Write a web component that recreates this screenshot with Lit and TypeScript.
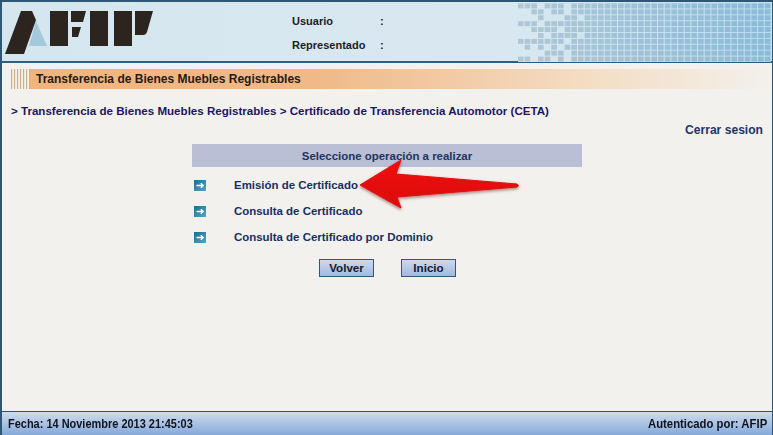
import { LitElement, html, css, svg } from "lit";
import { customElement } from "lit/decorators.js";

const PARTIAL: number[][] = [
  [0,1,2,4,5,6],
  [2,3,5,6],
  [3,7,8],
  [0,1,2,4,5,6,7],
  [2,3,4,5,7],
  [3,5,6,7,8],
  [0,1,2,3,4,5,6],
  [1,3,5,7],
  [4,5,6],
  [0,1,3,4,6],
];
const START = [8, 8, 10, 8, 8, 10, 8, 8, 8, 8];
const COLS = 38;

function lerp(a: number, b: number, t: number) {
  return Math.round(a + (b - a) * t);
}
function cellColor(c: number) {
  const t = Math.min(1, c / (COLS - 1));
  return `rgb(${lerp(176, 140, t)},${lerp(200, 186, t)},${lerp(214, 217, t)})`;
}

const cells = () => {
  const out: unknown[] = [];
  for (let r = 0; r < 10; r++) {
    const on = new Set(PARTIAL[r]);
    for (let c = 0; c < COLS; c++) {
      if (c >= START[r] || on.has(c)) {
        out.push(svg`<rect x=${c * 6.67} y=${r * 6 + 0.5} width="5.6" height="5" fill=${cellColor(c)}></rect>`);
      }
    }
  }
  return out;
};

@customElement("app-root")
export class AppRoot extends LitElement {
  static styles = css`
    :host {
      display: flex;
      flex-direction: column;
      position: relative;
      width: 773px;
      height: 435px;
      box-sizing: border-box;
      overflow: hidden;
      background: #f2f1ed;
      border-left: 2px solid #2f5673;
      border-right: 1px solid #2f5673;
      font-family: "Liberation Sans", Arial, sans-serif;
      font-weight: 700;
    }
    .header {
      flex: none;
      height: 63px;
      box-sizing: border-box;
      display: flex;
      background: linear-gradient(90deg, #d6e6ef 0%, #d9e8f0 65%, #c4deec 100%);
      border-top: 2px solid #2f5673;
      border-bottom: 2px solid #2f5f7c;
    }
    .logo { flex: none; width: 158px; height: 59px; display: block; }
    .user {
      flex: none;
      width: 358px;
      box-sizing: border-box;
      padding: 7px 0 0 132px;
      display: grid;
      grid-template-columns: 88px 10px;
      grid-auto-rows: 24px;
      align-items: center;
      font-size: 11px;
      color: #1c1c28;
    }
    .pixels { flex: none; width: 253px; height: 59px; display: block; margin-top: 1px; }
    .title {
      flex: none;
      margin: 6px 0 0 8px;
      height: 20px;
      display: flex;
      background: linear-gradient(90deg, #efb57e 0%, #f0b988 40%, #f4dcc2 75%, #f3f1ec 100%);
      color: #2a1a14;
      font-size: 12px;
      line-height: 21px;
    }
    .stripes {
      flex: none;
      width: 20px;
      background: #f2f1ed repeating-linear-gradient(90deg, #f2f1ed 0 1px, #cdb089 1px 2px, #f2e8d8 2px 3px);
    }
    .title span { padding-left: 6px; }
    .crumb {
      flex: none;
      margin: 15px 0 0 9px;
      font-size: 11.58px;
      line-height: 14px;
      color: #1c1660;
    }
    .logout {
      flex: none;
      margin: 5px 9px 0 0;
      text-align: right;
      font-size: 12.1px;
      line-height: 14px;
      color: #1d3566;
    }
    .panel {
      flex: none;
      width: 390px;
      margin: 7px 0 0 190px;
      color: #17305f;
      font-size: 11.45px;
    }
    .panel-head {
      height: 23px;
      line-height: 24px;
      background: #b9bfd5;
      text-align: center;
      color: #22345f;
    }
    .ops { display: flex; flex-direction: column; gap: 12px; padding: 11px 0 0 2px; }
    .op { display: flex; align-items: center; height: 14px; gap: 28px; }
    .op svg { flex: none; width: 12px; height: 11px; display: block; }
    .actions { display: flex; gap: 27px; margin: 15px 0 0 127px; }
    .btn {
      width: 55px;
      height: 18px;
      box-sizing: border-box;
      padding: 0;
      border: 1px solid #33597a;
      background: linear-gradient(180deg, #cfd8ee 0%, #a3b7df 100%);
      color: #14182e;
      font: inherit;
      font-size: 11.6px;
      line-height: 16px;
      text-align: center;
    }
    .spacer { flex: 1; }
    .footer {
      flex: none;
      height: 24px;
      box-sizing: border-box;
      display: flex;
      justify-content: space-between;
      align-items: center;
      padding: 0 5px 0 6px;
      border-top: 1px solid #2b5570;
      background: linear-gradient(180deg, #d0dcea 0%, #84a9dc 100%);
      color: #10131d;
      font-size: 12.2px;
    }
    .date { transform: scaleX(0.9); transform-origin: left center; }
    .auth { transform: scaleX(0.93); transform-origin: right center; }
    .arrow {
      position: absolute;
      left: 350px;
      top: 150px;
      width: 180px;
      height: 70px;
      overflow: visible;
      pointer-events: none;
    }
  `;

  private icon() {
    return html`<svg viewBox="0 0 12 11" aria-hidden="true">
      <defs>
        <linearGradient id="ib" x1="0" y1="0" x2="1" y2="1">
          <stop offset="0" stop-color="#1f6b96"></stop>
          <stop offset="1" stop-color="#55a3c8"></stop>
        </linearGradient>
      </defs>
      <rect width="12" height="11" fill="url(#ib)"></rect>
      <path d="M2.5 5.5H9M6.8 3.2L9.2 5.5L6.8 7.8" fill="none" stroke="#fff" stroke-width="1.4"></path>
    </svg>`;
  }

  render() {
    return html`
      <div class="header">
        <svg class="logo" viewBox="0 0 158 59" aria-label="AFIP">
          <path d="M34 19L45 44H27Z" fill="#a5c9dc"></path>
          <path fill="#2c241f" d="M19 9H30L34 18L22 52H3ZM48 9H66V44H48ZM69 9H84L81 20H69ZM70 25H79L76 35H70ZM88 9H106V44H88ZM112 9H130V44H112ZM133 9H151L145 30Q144 33 141 33H133Z"></path>
        </svg>
        <div class="user">
          <span>Usuario</span><span>:</span>
          <span>Representado</span><span>:</span>
        </div>
        <svg class="pixels" viewBox="0 0 253 60" preserveAspectRatio="none" aria-hidden="true">
          <defs>
            <linearGradient id="pb">
              <stop offset="0" stop-color="#d9e8f0"></stop>
              <stop offset="0.25" stop-color="#cfe5f0"></stop>
              <stop offset="1" stop-color="#b8dcef"></stop>
            </linearGradient>
          </defs>
          <rect width="253" height="60" fill="url(#pb)"></rect>
          ${cells()}
        </svg>
      </div>
      <div class="title">
        <div class="stripes"></div>
        <span>Transferencia de Bienes Muebles Registrables</span>
      </div>
      <div class="crumb">&gt; Transferencia de Bienes Muebles Registrables &gt; Certificado de Transferencia Automotor (CETA)</div>
      <div class="logout">Cerrar sesion</div>
      <div class="panel">
        <div class="panel-head">Seleccione operación a realizar</div>
        <div class="ops">
          <div class="op">${this.icon()}<span>Emisión de Certificado</span></div>
          <div class="op">${this.icon()}<span>Consulta de Certificado</span></div>
          <div class="op">${this.icon()}<span>Consulta de Certificado por Dominio</span></div>
        </div>
        <div class="actions">
          <button class="btn">Volver</button>
          <button class="btn">Inicio</button>
        </div>
      </div>
      <div class="spacer"></div>
      <div class="footer">
        <span class="date">Fecha: 14 Noviembre 2013 21:45:03</span>
        <span class="auth">Autenticado por: AFIP</span>
      </div>
      <svg class="arrow" viewBox="0 0 180 70" aria-hidden="true">
        <defs>
          <linearGradient id="ar" x1="0" y1="0" x2="0" y2="1">
            <stop offset="0" stop-color="#f41010"></stop>
            <stop offset="1" stop-color="#d80808"></stop>
          </linearGradient>
          <filter id="sh" x="-10%" y="-20%" width="120%" height="150%">
            <feDropShadow dx="0" dy="1.5" stdDeviation="1.5" flood-color="#6b1010" flood-opacity="0.55"></feDropShadow>
          </filter>
        </defs>
        <path d="M8 35L49 10L44 24L165 34Q168 36 165 37L45 47L49 58Z" fill="url(#ar)" filter="url(#sh)" stroke="#e40c0c" stroke-width="1" stroke-linejoin="round"></path>
      </svg>
    `;
  }
}
